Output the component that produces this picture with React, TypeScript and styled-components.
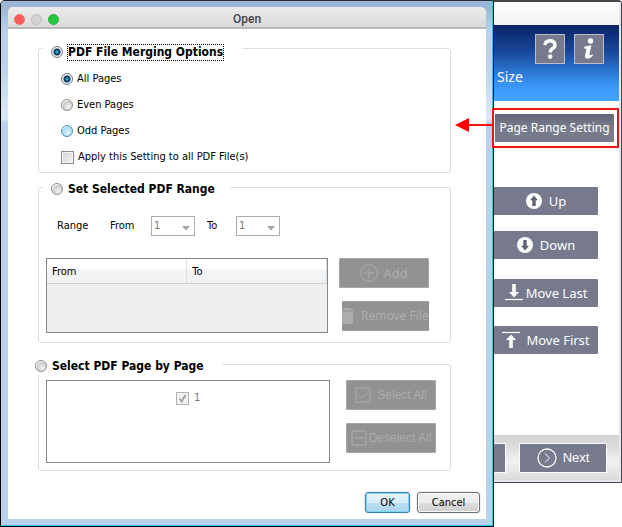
import React, { useState } from "react";
import styled, { createGlobalStyle, css } from "styled-components";

const GlobalStyle = createGlobalStyle`
  *, *::before, *::after { box-sizing: border-box; }
  body { margin: 0; background: #fff; }
  button, input, select, fieldset, legend { font: inherit; margin: 0; }
`;

const dialogFont = `"DejaVu Sans Condensed", "DejaVu Sans", sans-serif`;
const panelFont = `"Noto Sans", "Open Sans", sans-serif`;

const Desktop = styled.div`
  display: grid;
  grid-template-columns: minmax(0, 1fr) 128px;
  align-items: start;
  min-width: 600px;
`;

/* ---------- dialog ---------- */

const DialogFrame = styled.section`
  border: 1px solid #000;
  border-top-color: #2b2b33;
  border-top-left-radius: 5px;
  font: 11px/14px ${dialogFont};
  color: #000;
`;

const DialogEdge = styled.div`
  padding: 6px 6px 6px 7px;
  border-right: 1px solid #2fc4e6;
  border-bottom: 1px solid #2fc4e6;
  border-top-left-radius: 4px;
  background: linear-gradient(#9bb6d6 0, #9bb6d6 6px, #b9d1ea 30px, #b9d1ea 60px, #dbe9f7 118px, #b9d1ea 122px);
`;

const TitleBar = styled.header`
  display: grid;
  grid-template-columns: 1fr auto 1fr;
  align-items: center;
  height: 22px;
  padding: 3px 6px 0;
  border-bottom: 2px solid #b9b9b9;
  border-radius: 5px 5px 0 0;
  background: linear-gradient(#ececec, #d9d9d9);
  font: 500 12px/18px Roboto, sans-serif;
  color: #444;
`;

const Lights = styled.div`
  display: flex;
  gap: 6px;
`;

const Light = styled.button<{ $fill: string; $rim: string }>`
  width: 11px;
  height: 11px;
  padding: 0;
  border: 1px solid ${(p) => p.$rim};
  border-radius: 50%;
  background: ${(p) => p.$fill};
`;

const Title = styled.h1`
  margin: 0;
  font: inherit;
`;

const DialogBody = styled.form`
  padding: 6px 35px 0 30px;
  background: #fff;
`;

const Group = styled.fieldset<{ $space?: number; $bottom: number }>`
  min-width: 0;
  margin-top: ${(p) => p.$space ?? 0}px;
  padding: 0 0 ${(p) => p.$bottom}px 7px;
  border: 1px solid #d5dfe8;
  border-radius: 3px;
`;

const Legend = styled.legend<{ $width: number; $drop: number; $outdent?: number }>`
  display: flex;
  align-items: center;
  gap: 5px;
  width: ${(p) => p.$width}px;
  height: ${(p) => 18 + p.$drop}px;
  margin-left: ${(p) => -(p.$outdent ?? 3)}px;
  padding: ${(p) => p.$drop}px 0 0 ${(p) => (p.$outdent ? 0 : 8)}px;
  background: #fff;
  font: bold 12px/18px ${dialogFont};
  white-space: nowrap;
`;

const LegendText = styled.label<{ $focused?: boolean }>`
  line-height: 15px;
  ${(p) => p.$focused && css`outline: 1px dotted #000;`}
`;

const Radio = styled.input.attrs({ type: "radio" })<{ $tint?: boolean }>`
  appearance: none;
  flex: none;
  width: 12px;
  height: 12px;
  border: 1px solid ${(p) => (p.$tint ? "#4f8fb5" : "#8c9094")};
  border-radius: 50%;
  background: ${(p) =>
    p.$tint
      ? "radial-gradient(circle at 60% 65%, #dff5ff, #a5dcf7 60%, #e4f6ff 72%)"
      : "radial-gradient(circle at 65% 70%, #f2f2f2, #c9cbce 58%, #f6f6f6 68%)"};
  &:checked {
    border-color: #70777e;
    background: radial-gradient(circle, #58c5ee 0, #14567f 2px, #0c2f4e 3px, #e6ebef 4px, #f5f5f5 5px);
  }
`;

const Check = styled.input.attrs({ type: "checkbox" })`
  appearance: none;
  flex: none;
  width: 13px;
  height: 13px;
  border: 1px solid #8a8c90;
  background: linear-gradient(135deg, #cdd0d4, #f8f8f8);
  box-shadow: inset 0 0 0 1px #f4f4f4;
  &:disabled { border-color: #b1b1b1; background: #f0f0f0; }
`;

const OptionRow = styled.label`
  display: flex;
  align-items: center;
  gap: 4px;
  height: 26px;
  padding-left: 15px;
`;

const Options = styled.div`
  padding-top: 5px;
`;

const RangeRow = styled.div`
  display: flex;
  align-items: center;
  height: 20px;
  margin: 18px 0 22px 11px;
`;

const RangeLabel = styled.span`
  width: 53px;
`;

const FieldLabel = styled.label<{ $width: number }>`
  width: ${(p) => p.$width}px;
`;

const SelectBox = styled.span<{ $after?: number }>`
  position: relative;
  width: 44px;
  height: 20px;
  margin-right: ${(p) => p.$after ?? 0}px;
  svg { position: absolute; right: 5px; top: 10px; }
`;

const Select = styled.select`
  appearance: none;
  width: 100%;
  height: 100%;
  padding: 0 2px;
  border: 1px solid #adadb2;
  border-radius: 0;
  background: #fff;
  color: #777;
  opacity: 1;
`;

const Split = styled.div<{ $gap: number }>`
  display: flex;
  align-items: flex-start;
  gap: ${(p) => p.$gap}px;
`;

const RangeList = styled.div`
  flex: 1;
  height: 75px;
  border: 1px solid #828790;
  background: #efefef;
`;

const RangeTable = styled.table`
  width: 100%;
  border-collapse: collapse;
  table-layout: fixed;
  th {
    height: 24px;
    padding: 2px 5px 0;
    border-right: 1px solid #dedfe1;
    border-bottom: 1px solid #d0d1d4;
    background: linear-gradient(#fff 40%, #f5f6f8 41%, #f0f1f3);
    font-weight: normal;
    text-align: left;
  }
`;

const PageList = styled.div`
  flex: 1;
  height: 83px;
  padding: 10px 0 0 129px;
  border: 1px solid #828790;
`;

const PageItem = styled.label`
  display: flex;
  align-items: center;
  gap: 5px;
  color: #777;
`;

const CheckHolder = styled.span`
  position: relative;
  display: flex;
  svg { position: absolute; left: 2px; top: 2px; pointer-events: none; }
`;

const SideButtons = styled.div<{ $right: number }>`
  display: flex;
  flex-direction: column;
  gap: 13px;
  width: 90px;
  margin-right: ${(p) => p.$right}px;
`;

const GreyButton = styled.button<{ $sans?: boolean; $clip?: boolean; $gap: number }>`
  display: flex;
  align-items: center;
  justify-content: ${(p) => (p.$clip ? "flex-start" : "center")};
  gap: ${(p) => p.$gap}px;
  height: 30px;
  margin-left: ${(p) => (p.$clip ? 3 : 0)}px;
  padding: 0;
  border: 1px solid #a5a5a5;
  border-width: ${(p) => (p.$clip ? "1px 0" : "1px")};
  border-radius: ${(p) => (p.$clip ? 0 : 1)}px;
  background: #929292;
  color: #adadad;
  font: ${(p) =>
    p.$sans ? `12px/16px "Liberation Sans", sans-serif` : `${p.$clip ? 12 : 13}px/16px ${panelFont}`};
  white-space: nowrap;
  svg { flex: none; }
`;

const Actions = styled.footer`
  display: flex;
  justify-content: flex-end;
  gap: 7px;
  padding: 21px 6px 6px;
  background: #fff;
`;

const ActionButton = styled.button<{ $primary?: boolean }>`
  width: ${(p) => (p.$primary ? 45 : 63)}px;
  height: 21px;
  padding: 0;
  border: 1px solid ${(p) => (p.$primary ? "#3c7fb1" : "#707070")};
  border-radius: 3px;
  background: ${(p) =>
    p.$primary
      ? "linear-gradient(#eaf6fd 0, #d6ecf8 50%, #bcdff2 51%, #a9d6ee)"
      : "linear-gradient(#f2f2f2 0, #ebebeb 50%, #dddddd 51%, #cfcfcf)"};
  box-shadow: inset 0 0 0 1px ${(p) => (p.$primary ? "#7fd4f5" : "#fafafa")}, 0 0 0 1px #f0f0f0;
  color: #000;
`;

/* ---------- main window ---------- */

const MainWindow = styled.aside`
  border-top: 2px solid #45454b;
  border-right: 1px solid #45454b;
  border-bottom: 1px solid #45454b;
  border-top-right-radius: 4px;
  font: 13px/20px ${panelFont};
  color: #fff;
`;

const MainInner = styled.div`
  border-right: 2px solid #e3e8f0;
  border-bottom: 2px solid #e3e8f0;
`;

const MainTitle = styled.div`
  height: 23px;
  background: linear-gradient(#fff, #f3f3f3);
`;

const Banner = styled.div`
  height: 76px;
  padding: 9px 15px 0 3px;
  background: linear-gradient(#0c2265, #17489a 35%, #3b96f8 80%, #42a4ff);
`;

const BannerIcons = styled.div`
  display: flex;
  justify-content: flex-end;
  gap: 9px;
`;

const SquareButton = styled.button`
  display: flex;
  align-items: center;
  justify-content: center;
  width: 30px;
  height: 30px;
  padding: 0;
  border: 1px solid #b8bccb;
  background: #767a8c;
`;

const BannerText = styled.div`
  margin-top: 3px;
  font-size: 14px;
`;

const Callout = styled.div`
  position: relative;
  margin: 7px 0 0 -2px;
  padding: 4px 3px 4px 1px;
  border: 2px solid #f11414;
`;

const Arrow = styled.svg`
  position: absolute;
  right: 100%;
  top: 8px;
`;

const PanelButton = styled.button<{ $gap?: number; $dark?: boolean }>`
  display: flex;
  align-items: center;
  justify-content: center;
  gap: ${(p) => p.$gap ?? 0}px;
  width: 100%;
  height: 28px;
  padding: 0 0 1px;
  border: 0;
  border-radius: 0 1px 1px 0;
  background: ${(p) => (p.$dark ? "linear-gradient(#606475, #767a8b 40%)" : "#767a8c")};
  color: #fff;
  font-size: ${(p) => (p.$dark ? 12 : 13)}px;
  white-space: nowrap;
  svg { flex: none; }
`;

const MoveList = styled.div`
  display: flex;
  flex-direction: column;
  gap: 20px;
  padding: 39px 21px 81px 0;
`;

const MovePair = styled.div<{ $gap: number }>`
  display: grid;
  gap: ${(p) => p.$gap}px;
`;

const NavBar = styled.nav`
  display: flex;
  gap: 13px;
  height: 45px;
  padding: 8px 12px 0 0;
  background: linear-gradient(#d4d4d4, #d9d9d9 20%, #f1f1f1 60%, #e4e4e4 85%, #d8d8d8);
`;

const NavButton = styled.button<{ $stub?: boolean }>`
  display: flex;
  align-items: center;
  justify-content: center;
  gap: 6px;
  width: ${(p) => (p.$stub ? "12px" : "auto")};
  flex: ${(p) => (p.$stub ? "none" : 1)};
  height: 30px;
  padding: 0;
  border: 1px solid #fafafa;
  border-left-width: ${(p) => (p.$stub ? 0 : 1)}px;
  background: #767a8c;
  color: #fff;
  font: 13px/18px "Liberation Sans", sans-serif;
`;

const DropArrow = () => (
  <svg width="8" height="5" viewBox="0 0 8 5"><path d="M0 0h8L4 4.5z" fill="#a3a3a3" /></svg>
);

const CircleArrow = ({ down }: { down?: boolean }) => (
  <svg width="16" height="16" viewBox="0 0 16 16">
    <circle cx="8" cy="8" r="8" fill="#fff" />
    <path
      d="M8 2.5L12 7.2H9.7V13H6.3V7.2H4z"
      fill="#5f6375"
      transform={down ? "rotate(180 8 8)" : undefined}
    />
  </svg>
);

const BarArrow = ({ up }: { up?: boolean }) => (
  <svg width="18" height="17" viewBox="0 0 18 17">
    <g transform={up ? "rotate(180 9 8.5)" : undefined}>
      <path d="M7.2 0h3.6v8H14L9 13.6 4 8h3.2z" fill="#fff" />
      <path d="M0 15.5h18" stroke="#fff" strokeWidth="1.2" />
    </g>
  </svg>
);

export default function App() {
  const [mode, setMode] = useState("merge");
  const [pages, setPages] = useState("all");

  return (
    <>
      <GlobalStyle />
      <Desktop>
        <DialogFrame role="dialog" aria-labelledby="dialog-title">
          <DialogEdge>
            <TitleBar>
              <Lights>
                <Light type="button" aria-label="Close" $fill="#fc5b57" $rim="#e9706c" />
                <Light type="button" aria-label="Minimize" $fill="#d2d2d2" $rim="#bdbdbd" />
                <Light type="button" aria-label="Zoom" $fill="#27c840" $rim="#2fae43" />
              </Lights>
              <Title id="dialog-title">Open</Title>
            </TitleBar>
            <DialogBody>
              <Group $bottom={2}>
                <Legend $width={200} $drop={8}>
                  <Radio id="m1" name="mode" checked={mode === "merge"} onChange={() => setMode("merge")} />
                  <LegendText htmlFor="m1" $focused>PDF File Merging Options</LegendText>
                </Legend>
                <Options>
                  <OptionRow>
                    <Radio name="pages" checked={pages === "all"} onChange={() => setPages("all")} />
                    All Pages
                  </OptionRow>
                  <OptionRow>
                    <Radio name="pages" checked={pages === "even"} onChange={() => setPages("even")} />
                    Even Pages
                  </OptionRow>
                  <OptionRow>
                    <Radio $tint name="pages" checked={pages === "odd"} onChange={() => setPages("odd")} />
                    Odd Pages
                  </OptionRow>
                  <OptionRow>
                    <Check />
                    Apply this Setting to all PDF File(s)
                  </OptionRow>
                </Options>
              </Group>

              <Group $space={3} $bottom={9}>
                <Legend $width={187} $drop={4}>
                  <Radio id="m2" name="mode" checked={mode === "range"} onChange={() => setMode("range")} />
                  <LegendText htmlFor="m2">Set Selected PDF Range</LegendText>
                </Legend>
                <RangeRow>
                  <RangeLabel>Range</RangeLabel>
                  <FieldLabel htmlFor="from" $width={41}>From</FieldLabel>
                  <SelectBox $after={12}>
                    <Select id="from" disabled><option>1</option></Select>
                    <DropArrow />
                  </SelectBox>
                  <FieldLabel htmlFor="to" $width={29}>To</FieldLabel>
                  <SelectBox>
                    <Select id="to" disabled><option>1</option></Select>
                    <DropArrow />
                  </SelectBox>
                </RangeRow>
                <Split $gap={11}>
                  <RangeList>
                    <RangeTable>
                      <thead><tr><th scope="col">From</th><th scope="col">To</th></tr></thead>
                    </RangeTable>
                  </RangeList>
                  <SideButtons $right={21}>
                    <GreyButton type="button" disabled $gap={5}>
                      <svg width="18" height="18" viewBox="0 0 18 18" fill="none" stroke="#adadad">
                        <circle cx="9" cy="9" r="8.3" /><path d="M9 3.8v10.4M3.8 9h10.4" />
                      </svg>
                      Add
                    </GreyButton>
                    <GreyButton type="button" disabled $clip $gap={8}>
                      <svg width="11" height="16" viewBox="0 0 11 16" fill="#adadad">
                        <path d="M0 1h2V0h6v1h3v1.500H0zM0 3.500h11V14.500q0 1.500-1.500 1.500H1.500Q0 16 0 14.500z" />
                      </svg>
                      Remove File
                    </GreyButton>
                  </SideButtons>
                </Split>
              </Group>

              <Group $space={10} $bottom={7}>
                <Legend $width={187} $drop={4} $outdent={11}>
                  <Radio id="m3" name="mode" checked={mode === "page"} onChange={() => setMode("page")} />
                  <LegendText htmlFor="m3">Select PDF Page by Page</LegendText>
                </Legend>
                <Options>
                  <Split $gap={16}>
                    <PageList>
                      <PageItem>
                        <CheckHolder>
                          <Check disabled defaultChecked />
                          <svg width="9" height="9" viewBox="0 0 9 9">
                            <path d="M1.500 4.500l2.200 3L7.500 1" fill="none" stroke="#a6a6a6" strokeWidth="2" />
                          </svg>
                        </CheckHolder>
                        1
                      </PageItem>
                    </PageList>
                    <SideButtons $right={14}>
                      <GreyButton type="button" disabled $sans $gap={6}>
                        <svg width="16" height="16" viewBox="0 0 16 16" fill="none" stroke="#adadad">
                          <path d="M1 1h14v14H1zM3.500 8l3 3.500 6-6" />
                        </svg>
                        Select All
                      </GreyButton>
                      <GreyButton type="button" disabled $sans $gap={2}>
                        <svg width="16" height="16" viewBox="0 0 16 16" fill="none" stroke="#adadad">
                          <path d="M1 1h14v14H1zM3.500 8h9" />
                        </svg>
                        Deselect All
                      </GreyButton>
                    </SideButtons>
                  </Split>
                </Options>
              </Group>
            </DialogBody>
            <Actions>
              <ActionButton type="submit" $primary>OK</ActionButton>
              <ActionButton type="button">Cancel</ActionButton>
            </Actions>
          </DialogEdge>
        </DialogFrame>

        <MainWindow>
          <MainInner>
            <MainTitle />
            <Banner>
              <BannerIcons>
                <SquareButton type="button" aria-label="Help">
                  <svg width="14" height="20" viewBox="0 0 14 20">
                    <path d="M2 6.200Q2.300 1.700 7 1.700T12 6Q12 8.300 9.700 9.600 7.300 11 7.300 13.500" fill="none" stroke="#fff" strokeWidth="3.400" />
                    <circle cx="7.200" cy="17.600" r="2.300" fill="#fff" />
                  </svg>
                </SquareButton>
                <SquareButton type="button" aria-label="Information">
                  <svg width="12" height="22" viewBox="0 0 12 22">
                    <circle cx="7.500" cy="3" r="2.700" fill="#fff" />
                    <path d="M1.500 8.600L8.400 7.300 6.400 16.500Q6.300 18 9.600 16.200L9.900 17.800Q7 21 3.800 20.600 1.500 20 2.100 17.200L3.500 10.800 1.300 10.600z" fill="#fff" />
                  </svg>
                </SquareButton>
              </BannerIcons>
              <BannerText>Size</BannerText>
            </Banner>
            <Callout>
              <Arrow width="39" height="14" viewBox="0 0 39 14">
                <path d="M0 7L14 0v14z" fill="#fe0000" />
                <path d="M13 7h26" stroke="#f11414" strokeWidth="2" />
              </Arrow>
              <PanelButton type="button" $dark>Page Range Setting</PanelButton>
            </Callout>
            <MoveList>
              <MovePair $gap={16}>
                <PanelButton type="button" $gap={7}><CircleArrow />Up</PanelButton>
                <PanelButton type="button" $gap={7}><CircleArrow down />Down</PanelButton>
              </MovePair>
              <MovePair $gap={19}>
                <PanelButton type="button" $gap={3}><BarArrow />Move Last</PanelButton>
                <PanelButton type="button" $gap={6}><BarArrow up />Move First</PanelButton>
              </MovePair>
            </MoveList>
            <NavBar>
              <NavButton type="button" aria-label="Previous" $stub />
              <NavButton type="button">
                <svg width="20" height="20" viewBox="0 0 20 20" fill="none" stroke="#fff">
                  <circle cx="10" cy="10" r="9" strokeWidth="1.300" /><path d="M8 5.500l4.500 4.500L8 14.500" />
                </svg>
                Next
              </NavButton>
            </NavBar>
          </MainInner>
        </MainWindow>
      </Desktop>
    </>
  );
}
